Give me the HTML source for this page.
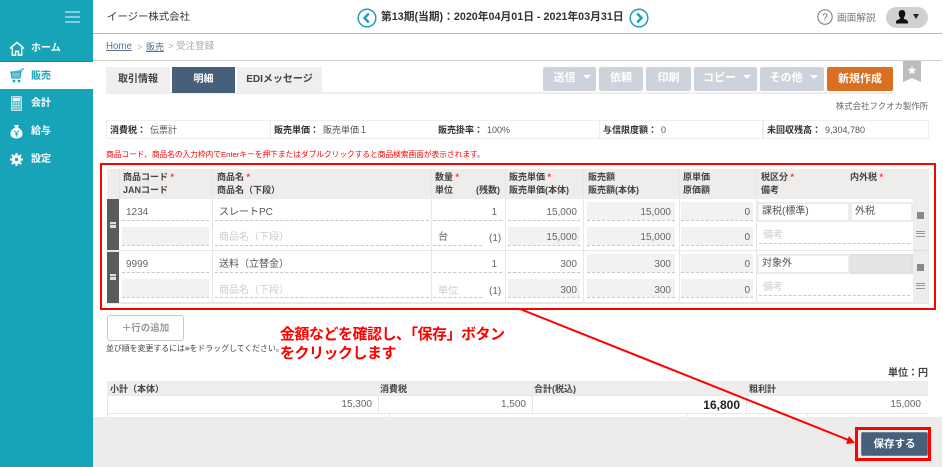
<!DOCTYPE html>
<html lang="ja"><head><meta charset="utf-8"><title>受注登録</title>
<style>
html,body{margin:0;padding:0;background:#fff}
body{width:943px;height:467px;position:relative;overflow:hidden;font-family:"Liberation Sans","Noto Sans CJK JP",sans-serif;font-size:10px;color:#444}
div,span,a{position:absolute;white-space:nowrap;box-sizing:border-box}
.t{line-height:14px;height:14px}
.b{font-weight:bold}
.nav{color:#fff;font-weight:bold;font-size:10px;left:31px;line-height:14px}
.tab{top:67px;height:26px;line-height:26px;text-align:center;background:#f0eeee;color:#444;font-weight:bold;font-size:10px}
.btn{top:67px;height:24px;line-height:23px;text-align:center;background:#ccd3da;color:#fff;font-weight:bold;font-size:11px;border-radius:2px}
.car{display:inline-block;position:static;width:0;height:0;border-left:4px solid transparent;border-right:4px solid transparent;border-top:4px solid #fff;margin-left:7px;vertical-align:2px}
.cell{background:#fff;line-height:18px;padding-left:3px;font-size:9px;color:#555}
.cell b{color:#333;margin-right:4px}
.h{font-weight:bold;font-size:9px;color:#444;line-height:13px}
.r{color:#f33;font-style:normal}
.hl{background:#e8e6e6}
.in{height:18px;background:#f2f2f2}
.dot{height:0;border-bottom:1px dashed #c8c8c8}
.v{line-height:14px;font-size:10px;color:#666}
.right{text-align:right}
.ph{color:#ccc;font-size:10px;line-height:14px}
.sel{height:20px;background:#fff;border:2px solid #ececec;line-height:16px;padding-left:3px;font-size:10px;color:#555}
</style></head><body>

<!-- sidebar -->
<div style="left:0;top:0;width:93px;height:467px;background:#17a3b8"></div>
<div style="left:0;top:61px;width:93px;height:1px;background:#138b9e"></div>
<div style="left:0;top:62px;width:93px;height:27px;background:#fff"></div>
<div style="left:65px;top:11px;width:15px;height:2px;background:#7fd0dc"></div>
<div style="left:65px;top:16px;width:15px;height:2px;background:#7fd0dc"></div>
<div style="left:65px;top:21px;width:15px;height:2px;background:#7fd0dc"></div>
<svg style="position:absolute;left:9px;top:41px" width="16" height="15" viewBox="0 0 17 16"><path d="M1 8 8.500 1.500 16 8M3.500 7v8h3.500v-4h3v4h3.500V7" fill="none" stroke="#fff" stroke-width="1.600"/></svg>
<span class="nav" style="top:42px">ホーム</span>
<svg style="position:absolute;left:10px;top:68px" width="14" height="15" viewBox="0 0 14 15"><path d="M0 4h11l1-3h2M1 4l1 6h8l1-6" fill="#6cc4d2" stroke="#17a3b8" stroke-width="1"/><circle cx="4" cy="13" r="1.400" fill="#17a3b8"/><circle cx="9" cy="13" r="1.400" fill="#17a3b8"/></svg>
<span class="nav" style="top:70px;color:#17a3b8">販売</span>
<svg style="position:absolute;left:11px;top:96px" width="11" height="15" viewBox="0 0 11 15"><rect x=".5" y=".5" width="10" height="14" rx="1" fill="#6cc4d2" stroke="#bfe6ec"/><rect x="2" y="2" width="7" height="3" fill="#e6f6f8"/><path d="M2 7h7M2 9.500h7M2 12h7" stroke="#e6f6f8" stroke-dasharray="1.500 1"/></svg>
<span class="nav" style="top:97px">会計</span>
<svg style="position:absolute;left:10px;top:124px" width="13" height="15" viewBox="0 0 14 16"><path d="M4.500 1h5L8.500 4c3 1 5 3.500 5 6.500 0 3-3 5-6.500 5S.5 13.500.5 10.500c0-3 2-5.500 5-6.500z" fill="#fff"/><path d="M4.500 7 7 10l2.500-3M7 10v3.500M5 11h4" stroke="#17a3b8" fill="none"/></svg>
<span class="nav" style="top:125px">給与</span>
<svg style="position:absolute;left:10px;top:153px" width="13" height="13" viewBox="0 0 14 14"><circle cx="7" cy="7" r="3.500" fill="none" stroke="#fff" stroke-width="3"/><path d="M7 0v14M0 7h14M2 2l10 10M12 2 2 12" stroke="#fff" stroke-width="2.200"/><circle cx="7" cy="7" r="1.800" fill="#17a3b8"/></svg>
<span class="nav" style="top:153px">設定</span>

<!-- header -->
<div style="left:93px;top:33px;width:849px;height:1px;background:#b4b4b4"></div>
<div style="left:93px;top:60px;width:849px;height:1px;background:#cfcfcf"></div>
<span class="t" style="left:107px;top:11px;font-size:10.400px;color:#333">イージー株式会社</span>
<svg style="position:absolute;left:357px;top:8px" width="20" height="20" viewBox="0 0 20 20"><circle cx="10" cy="10" r="8.800" fill="#fff" stroke="#1a9fb8" stroke-width="1.500"/><path d="M11.800 5.500 7.500 10l4.300 4.500" fill="none" stroke="#1a9fb8" stroke-width="2.400"/></svg>
<span class="t b" style="left:381px;top:10px;font-size:10.750px;color:#333">第13期(当期)：2020年04月01日 - 2021年03月31日</span>
<svg style="position:absolute;left:629px;top:8px" width="20" height="20" viewBox="0 0 20 20"><circle cx="10" cy="10" r="8.800" fill="#fff" stroke="#1a9fb8" stroke-width="1.500"/><path d="M8.200 5.500 12.500 10l-4.300 4.500" fill="none" stroke="#1a9fb8" stroke-width="2.400"/></svg>
<svg style="position:absolute;left:817px;top:9px" width="16" height="16" viewBox="0 0 16 16"><circle cx="8" cy="8" r="7.200" fill="none" stroke="#777" stroke-width="1"/><text x="8" y="11.500" text-anchor="middle" font-size="10" fill="#666" font-family="Liberation Sans">?</text></svg>
<span class="t" style="left:837px;top:12px;font-size:9.700px;color:#777">画面解説</span>
<div style="left:886px;top:7px;width:42px;height:21px;border-radius:11px;background:#d0d0d0"></div>
<svg style="position:absolute;left:895px;top:10px" width="25" height="15" viewBox="0 0 25 15"><path d="M7 0c2.200 0 3.300 1.600 3.300 3.800 0 1.500-.6 2.900-1.500 3.700v1.200c1.500.8 4.200 1.200 4.200 3.300v1.500H1V12c0-2.100 2.700-2.500 4.200-3.300V7.500C4.300 6.700 3.700 5.300 3.700 3.800 3.700 1.600 4.800 0 7 0z" fill="#111"/><path d="M18 4h6l-3 5z" fill="#222"/></svg>

<!-- breadcrumb -->
<span class="t" style="left:106px;top:40px;font-size:9.700px;color:#5a7391;text-decoration:underline">Home</span>
<span class="t" style="left:137px;top:40px;font-size:9px;color:#aaa">&gt;</span>
<span class="t" style="left:146px;top:40px;font-size:9px;color:#5a7391;text-decoration:underline">販売</span>
<span class="t" style="left:168px;top:40px;font-size:9.500px;color:#aaa">&gt; 受注登録</span>

<!-- tabs -->
<div style="left:106px;top:92px;width:787px;height:2px;background:#eee"></div>
<div class="tab" style="left:106px;width:64px">取引情報</div>
<div class="tab" style="left:172px;width:63px;background:#46607c;color:#fff">明細</div>
<div class="tab" style="left:237px;width:85px">EDIメッセージ</div>
<div class="btn" style="left:543px;width:53px;padding-left:5px">送信<span class="car"></span></div>
<div class="btn" style="left:599px;width:44px">依頼</div>
<div class="btn" style="left:646px;width:45px">印刷</div>
<div class="btn" style="left:694px;width:63px;padding-left:3px">コピー<span class="car"></span></div>
<div class="btn" style="left:760px;width:64px;padding-left:3px">その他<span class="car"></span></div>
<div class="btn" style="left:827px;width:66px;background:#d96f20;line-height:24px">新規作成</div>
<svg style="position:absolute;left:903px;top:61px" width="18" height="21" viewBox="0 0 18 21"><path d="M0 0h18v21l-9-4-9 4z" fill="#bdbdbd"/><path d="M9 5l1.300 2.800 3 .3-2.200 2 .6 3L9 11.600 6.300 13.100l.6-3-2.200-2 3-.3z" fill="#fff"/></svg>
<span class="t" style="right:15px;top:99px;font-size:8.400px;color:#666">株式会社フクオカ製作所</span>

<!-- info -->
<div style="left:106px;top:120px;width:823px;height:19px;background:#eee"></div>
<div class="cell" style="left:107px;width:163px;top:121px;height:17px"><b>消費税：</b>伝票計</div>
<div class="cell" style="left:271px;width:164px;top:121px;height:17px"><b>販売単価：</b>販売単価１</div>
<div class="cell" style="left:435px;width:164px;top:121px;height:17px"><b>販売掛率：</b>100%</div>
<div class="cell" style="left:600px;width:162px;top:121px;height:17px"><b>与信限度額：</b>0</div>
<div class="cell" style="left:764px;width:164px;top:121px;height:17px"><b>未回収残高：</b>9,304,780</div>
<span class="t" style="left:106px;top:148px;font-size:7.700px;color:#f00">商品コード、商品名の入力枠内でEnterキーを押下またはダブルクリックすると商品検索画面が表示されます。</span>

<!-- detail table -->
<div style="left:107px;top:169px;width:822px;height:135px;background:#e8e6e6"></div>
<div style="left:107px;top:169px;width:822px;height:30px;background:#efecec"></div>
<div style="left:119px;top:199px;width:794px;height:51px;background:#fff"></div>
<div style="left:119px;top:251px;width:794px;height:51px;background:#fff"></div>
<div class="hl" style="left:212px;top:169px;width:1px;height:134px"></div>
<div class="hl" style="left:431px;top:169px;width:1px;height:134px"></div>
<div class="hl" style="left:505px;top:169px;width:1px;height:134px"></div>
<div class="hl" style="left:583px;top:169px;width:1px;height:134px"></div>
<div class="hl" style="left:679px;top:169px;width:1px;height:134px"></div>
<div class="hl" style="left:756px;top:169px;width:1px;height:134px"></div>
<div style="left:119px;top:169px;width:1px;height:30px;background:#e4e2e2"></div>
<div style="left:913px;top:199px;width:15px;height:104px;background:#efecec"></div>
<div style="left:913px;top:250px;width:15px;height:1px;background:#e0e0e0"></div>

<div style="left:107px;top:199px;width:12px;height:51px;background:#5b5b5b"></div>
<div style="left:107px;top:252px;width:12px;height:51px;background:#5b5b5b"></div>
<span style="left:110px;top:222px;width:6px;height:6px;background:#ddd"></span>
<span style="left:110px;top:224px;width:6px;height:1px;background:#777"></span>
<span style="left:110px;top:274px;width:6px;height:6px;background:#ddd"></span>
<span style="left:110px;top:276px;width:6px;height:1px;background:#777"></span>

<span class="h" style="left:123px;top:171px">商品コード <i class="r">*</i><br>JANコード</span>
<span class="h" style="left:217px;top:171px">商品名 <i class="r">*</i><br>商品名（下段）</span>
<span class="h" style="left:435px;top:171px">数量 <i class="r">*</i><br>単位</span>
<span class="h" style="left:476px;top:184px">(残数)</span>
<span class="h" style="left:509px;top:171px">販売単価 <i class="r">*</i><br>販売単価(本体)</span>
<span class="h" style="left:588px;top:171px">販売額<br>販売額(本体)</span>
<span class="h" style="left:683px;top:171px">原単価<br>原価額</span>
<span class="h" style="left:761px;top:171px">税区分 <i class="r">*</i><br>備考</span>
<span class="h" style="left:850px;top:171px">内外税 <i class="r">*</i></span>

<!-- grey inputs -->
<div class="in" style="left:122px;top:227px;width:87px"></div>
<div class="in" style="left:122px;top:279px;width:87px"></div>
<div class="in" style="left:508px;top:227px;width:72px"></div>
<div class="in" style="left:508px;top:279px;width:72px"></div>
<div class="in" style="left:587px;top:202px;width:88px"></div>
<div class="in" style="left:587px;top:227px;width:88px"></div>
<div class="in" style="left:587px;top:254px;width:88px"></div>
<div class="in" style="left:587px;top:279px;width:88px"></div>
<div class="in" style="left:681px;top:202px;width:72px"></div>
<div class="in" style="left:681px;top:227px;width:72px"></div>
<div class="in" style="left:681px;top:254px;width:72px"></div>
<div class="in" style="left:681px;top:279px;width:72px"></div>

<!-- dashed lines -->
<div class="dot" style="left:122px;top:220px;width:87px"></div><div class="dot" style="left:122px;top:245px;width:87px"></div>
<div class="dot" style="left:122px;top:272px;width:87px"></div><div class="dot" style="left:122px;top:297px;width:87px"></div>
<div class="dot" style="left:215px;top:220px;width:214px"></div><div class="dot" style="left:215px;top:245px;width:214px"></div>
<div class="dot" style="left:215px;top:272px;width:214px"></div><div class="dot" style="left:215px;top:297px;width:214px"></div>
<div class="dot" style="left:433px;top:220px;width:69px"></div><div class="dot" style="left:433px;top:245px;width:49px"></div>
<div class="dot" style="left:433px;top:272px;width:69px"></div><div class="dot" style="left:433px;top:297px;width:49px"></div>
<div class="dot" style="left:508px;top:220px;width:72px"></div><div class="dot" style="left:508px;top:245px;width:72px"></div>
<div class="dot" style="left:508px;top:272px;width:72px"></div><div class="dot" style="left:508px;top:297px;width:72px"></div>
<div class="dot" style="left:587px;top:220px;width:88px"></div><div class="dot" style="left:587px;top:245px;width:88px"></div>
<div class="dot" style="left:587px;top:272px;width:88px"></div><div class="dot" style="left:587px;top:297px;width:88px"></div>
<div class="dot" style="left:681px;top:220px;width:72px"></div><div class="dot" style="left:681px;top:245px;width:72px"></div>
<div class="dot" style="left:681px;top:272px;width:72px"></div><div class="dot" style="left:681px;top:297px;width:72px"></div>
<div class="dot" style="left:759px;top:243px;width:151px"></div><div class="dot" style="left:759px;top:295px;width:151px"></div>

<!-- row values -->
<span class="v" style="left:126px;top:206px">1234</span>
<span class="v" style="left:219px;top:206px;color:#555">スレートPC</span>
<span class="ph" style="left:219px;top:231px">商品名（下段）</span>
<span class="v" style="left:126px;top:258px">9999</span>
<span class="v" style="left:219px;top:258px;color:#555">送料（立替金）</span>
<span class="ph" style="left:219px;top:284px">商品名（下段）</span>

<span class="v right" style="right:446px;top:206px">1</span>
<span class="v" style="left:438px;top:231px">台</span>
<span class="v" style="left:489px;top:232px">(1)</span>
<span class="v right" style="right:446px;top:258px">1</span>
<span class="ph" style="left:438px;top:285px">単位</span>
<span class="v" style="left:489px;top:285px">(1)</span>

<span class="v right" style="right:366px;top:206px">15,000</span>
<span class="v right" style="right:366px;top:231px">15,000</span>
<span class="v right" style="right:366px;top:258px">300</span>
<span class="v right" style="right:366px;top:284px">300</span>

<span class="v right" style="right:272px;top:206px">15,000</span>
<span class="v right" style="right:272px;top:231px">15,000</span>
<span class="v right" style="right:272px;top:258px">300</span>
<span class="v right" style="right:272px;top:284px">300</span>

<span class="v right" style="right:193px;top:206px">0</span>
<span class="v right" style="right:193px;top:231px">0</span>
<span class="v right" style="right:193px;top:258px">0</span>
<span class="v right" style="right:193px;top:284px">0</span>

<!-- tax -->
<div class="sel" style="left:757px;top:202px;width:93px">課税(標準)</div>
<div class="sel" style="left:850px;top:202px;width:63px">外税</div>
<span class="ph" style="left:763px;top:229px">備考</span>
<div class="sel" style="left:757px;top:254px;width:93px">対象外</div>
<div class="sel" style="left:850px;top:254px;width:63px;background:#e4e4e4;border-color:#e0e0e0"></div>
<span class="ph" style="left:763px;top:281px">備考</span>

<div style="left:917px;top:212px;width:7px;height:7px;background:#8a8a8a"></div>
<div style="left:916px;top:231px;width:9px;height:6px;border-top:1px solid #999;border-bottom:1px solid #999"></div>
<div style="left:916px;top:233px;width:9px;height:1px;background:#999"></div>
<div style="left:917px;top:264px;width:7px;height:7px;background:#8a8a8a"></div>
<div style="left:916px;top:283px;width:9px;height:6px;border-top:1px solid #999;border-bottom:1px solid #999"></div>
<div style="left:916px;top:285px;width:9px;height:1px;background:#999"></div>

<!-- red box -->
<div style="left:100px;top:163px;width:836px;height:147px;border:2px solid #f00"></div>

<!-- add row -->
<div style="left:107px;top:315px;width:77px;height:26px;border:1px solid #c8c8c8;border-radius:3px;background:#fff;text-align:center;line-height:25px;font-size:9.500px;color:#999;font-weight:bold">＋行の追加</div>
<span class="t" style="left:106px;top:342px;font-size:7.900px;color:#444">並び順を変更するには≡をドラッグしてください。</span>

<!-- annotation -->
<span class="b" style="left:280px;top:325px;font-size:15px;line-height:19px;color:#f00;letter-spacing:-.5px;height:19px">金額などを確認し、「保存」ボタン</span>
<span class="b" style="left:280px;top:344px;font-size:15px;line-height:19px;color:#f00;letter-spacing:-.5px;height:19px">をクリックします</span>

<!-- summary -->
<span class="t" style="right:15px;top:367px;font-size:10px;font-weight:bold;color:#444">単位：円</span>
<div style="left:107px;top:381px;width:821px;height:36px;background:#e8e6e6"></div>
<div style="left:107px;top:381px;width:821px;height:14px;background:#efecec"></div>
<div style="left:108px;top:396px;width:270px;height:17px;background:#fff"></div>
<div style="left:379px;top:396px;width:153px;height:17px;background:#fff"></div>
<div style="left:533px;top:396px;width:213px;height:17px;background:#fff"></div>
<div style="left:747px;top:396px;width:181px;height:17px;background:#fff"></div>
<div style="left:108px;top:414px;width:281px;height:3px;background:#fff"></div>
<div style="left:390px;top:414px;width:297px;height:3px;background:#fff"></div>
<div style="left:688px;top:414px;width:119px;height:3px;background:#fff"></div>
<div style="left:808px;top:414px;width:120px;height:3px;background:#fff"></div>
<span class="h" style="left:110px;top:383px">小計（本体）</span>
<span class="h" style="left:380px;top:383px">消費税</span>
<span class="h" style="left:534px;top:383px">合計(税込)</span>
<span class="h" style="left:749px;top:383px">粗利計</span>
<span class="v right" style="right:571px;top:398px">15,300</span>
<span class="v right" style="right:417px;top:398px">1,500</span>
<span class="right" style="right:203px;top:398px;font-size:12px;line-height:14px;font-weight:bold;color:#222">16,800</span>
<span class="v right" style="right:22px;top:398px">15,000</span>

<!-- footer -->
<div style="left:93px;top:417px;width:849px;height:50px;background:#eeebeb"></div>
<div style="left:861px;top:432px;width:67px;height:24px;background:#46607c;border-radius:2px;border:1px solid #6b8098;color:#fff;font-weight:bold;font-size:10.500px;text-align:center;line-height:22px">保存する</div>
<div style="left:855px;top:427px;width:76px;height:34px;border:3px solid #f00"></div>

<!-- arrow -->
<svg style="position:absolute;left:515px;top:305px" width="345" height="145" viewBox="515 305 345 145"><path d="M520 309 851 441" stroke="#f00" stroke-width="2" fill="none"/><path d="M855 443 846 444 849 436z" fill="#f00"/></svg>

</body></html>
